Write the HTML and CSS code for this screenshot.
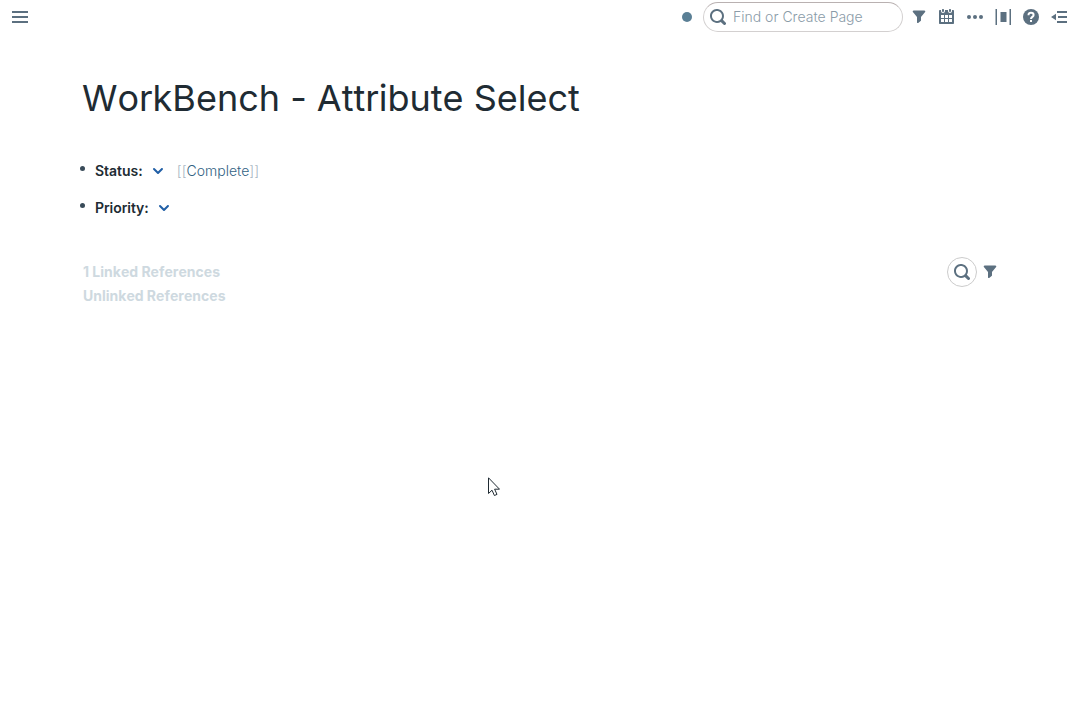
FILE: index.html
```html
<!DOCTYPE html>
<html lang="en">
<head>
<meta charset="utf-8">
<meta name="viewport" content="width=device-width, initial-scale=1">
<title>WorkBench - Attribute Select</title>
<link rel="stylesheet" href="styles.css">
</head>
<body>
<svg class="sprite" aria-hidden="true">
  <symbol id="search" viewBox="0 0 16 16"><path d="M15.55 13.43l-2.67-2.68a6.94 6.94 0 001.11-3.76c0-3.87-3.13-7-7-7s-7 3.13-7 7 3.13 7 7 7c1.39 0 2.68-.42 3.76-1.11l2.68 2.67a1.498 1.498 0 102.12-2.12zm-8.56-1.44c-2.76 0-5-2.24-5-5s2.24-5 5-5 5 2.24 5 5-2.24 5-5 5z"/></symbol>
  <symbol id="filter" viewBox="0 0 16 16"><path d="M13.300 1.500H2.700a1 1 0 00-.800 1.600L6 8v5.300a.75.75 0 001.200.600l2.400-1.900c.3-.2.400-.5.400-.8V8l4.100-4.900A1 1 0 0013.300 1.500z"/></symbol>
  <symbol id="chevron" viewBox="0 0 16 16"><path d="M12 5c-.28 0-.53.11-.71.29L8 8.590l-3.290-3.300a1.003 1.003 0 00-1.420 1.420l4 4c.18.18.43.29.71.29s.53-.11.71-.29l4-4A1.003 1.003 0 0012 5z"/></symbol>
</svg>
<header class="topbar">
  <button class="icon-button" aria-label="Menu"><svg class="icon" viewBox="0 0 16 16"><path d="M0 2h16v2H0zM0 7h16v2H0zM0 12h16v2H0z"/></svg></button>
  <div class="tools">
    <span class="sync-dot"></span>
    <label class="search-box">
      <svg class="icon"><use href="#search"/></svg>
      <input class="search-input" type="text" aria-label="Find or Create Page" placeholder="Find or Create Page">
    </label>
    <div class="actions">
      <button class="icon-button" aria-label="Filter"><svg class="icon"><use href="#filter"/></svg></button>
      <button class="icon-button" aria-label="Daily notes"><svg class="icon" viewBox="0 0 16 16"><path d="M11 3c.6 0 1-.5 1-1V1c0-.6-.4-1-1-1s-1 .4-1 1v1c0 .5.4 1 1 1zm3-2h-1v1c0 1.100-.9 2-2 2s-2-.9-2-2V1H6v1c0 1.100-.9 2-2 2s-2-.9-2-2V1H1c-.6 0-1 .5-1 1v12c0 .6.4 1 1 1h13c.6 0 1-.4 1-1V2c0-.6-.5-1-1-1zM5 13H2v-3h3v3zm0-4H2V6h3v3zm4 4H6v-3h3v3zm0-4H6V6h3v3zm4 4h-3v-3h3v3zm0-4h-3V6h3v3zM4 3c.6 0 1-.5 1-1V1c0-.6-.4-1-1-1S3 .4 3 1v1c0 .5.4 1 1 1z"/></svg></button>
      <button class="icon-button" aria-label="More"><svg class="icon" viewBox="0 0 16 16"><circle cx="2" cy="8" r="2"/><circle cx="8" cy="8" r="2"/><circle cx="14" cy="8" r="2"/></svg></button>
      <button class="icon-button" aria-label="Page width"><svg class="icon" viewBox="0 0 16 16"><path d="M.5 0H2v16H.5zM14.500 0H16v16h-1.500zM5.500 3h6v10h-6z"/></svg></button>
      <button class="icon-button" aria-label="Help"><svg class="icon" viewBox="0 0 16 16"><circle cx="8" cy="8" r="8"/><path class="question" d="M5.500 6.200C5.500 4.500 6.500 3.800 8 3.800s2.600.8 2.600 2.200c0 1.900-2.500 1.900-2.600 4M8 11v2"/></svg></button>
      <button class="icon-button" aria-label="Open sidebar"><svg class="icon" viewBox="0 0 16 16"><path d="M6 2h10v2H6zM7 7h9v2H7zM6 12h10v2H6zM5 4.800v6.400L0 8z"/></svg></button>
    </div>
  </div>
</header>
<main class="page">
  <h1 class="title">WorkBench - Attribute Select</h1>
  <ul class="blocks">
    <li class="block"><span class="bullet"></span><strong>Status:</strong><button class="chevron-button" aria-label="Choose status"><svg class="icon chevron"><use href="#chevron"/></svg></button><a class="page-link" href="#"><span class="bracket">[[</span>Complete<span class="bracket">]]</span></a></li>
    <li class="block"><span class="bullet"></span><strong>Priority:</strong><button class="chevron-button" aria-label="Choose priority"><svg class="icon chevron"><use href="#chevron"/></svg></button></li>
  </ul>
  <section class="references">
    <div class="reference-names"><div>1 Linked References</div><div>Unlinked References</div></div>
    <div class="reference-tools">
      <button class="round-button" aria-label="Search references"><svg class="icon"><use href="#search"/></svg></button>
      <button class="icon-button" aria-label="Filter references"><svg class="icon"><use href="#filter"/></svg></button>
    </div>
  </section>
</main>
<svg class="cursor" viewBox="0 0 12 20" aria-hidden="true"><path d="M.5.800V16.500L4 13.200l2.400 5.300 2.600-1.100-2.400-5.200h4.900z"/></svg>
</body>
</html>
```
FILE: styles.css
```css
* { box-sizing: border-box; }
body { margin: 0; background: #fff; color: #202b33; font: 14px/24px Inter, sans-serif; font-kerning: none; font-variant-ligatures: no-contextual; }
button { display: inline-flex; align-items: center; justify-content: center; padding: 0; border: 0; background: none; }
.sprite { display: none; }
.icon { display: block; width: 16px; height: 16px; flex: none; fill: #5c7080; }
.topbar { display: flex; align-items: center; justify-content: space-between; height: 34px; padding: 0 13px 0 12px; }
.tools { display: flex; align-items: center; }
.sync-dot { width: 10px; height: 10px; margin-right: 11px; border-radius: 50%; background: #5a7f95; }
.search-box { display: flex; align-items: center; gap: 7px; width: 200px; height: 30px; margin-right: 8px; padding: 0 6px; border: 1px solid #d3d0d0; border-top-color: #b9b1b1; border-radius: 15px; }
.search-input { flex: 1; min-width: 0; padding: 0; border: 0; outline: 0; background: none; color: #202b33; font: 300 14px/20px Inter, sans-serif; font-kerning: none; }
.search-input::placeholder { color: #8a9ba8; opacity: 1; }
.actions { display: flex; gap: 12px; }
.question { fill: none; stroke: #fff; stroke-width: 2; }
.page { padding: 40px 82px 0 80px; }
.title { margin: 0; padding-left: 2px; font-size: 36px; line-height: 48px; font-weight: 400; }
.blocks { margin: 37px 0 0; padding: 0; list-style: none; }
.block { display: flex; align-items: center; height: 24px; margin-bottom: 13px; }
.block strong { font-weight: 600; }
.bullet { width: 5px; height: 5px; margin: 0 10px 5px 0; border-radius: 50%; background: #394b59; }
.chevron-button { margin: 0 11px 0 7px; }
.chevron { fill: #215fa6; }
.page-link { color: #326384; font-weight: 300; text-decoration: none; }
.bracket { color: #a7b6c2; }
.references { display: flex; align-items: flex-start; justify-content: space-between; margin-top: 40px; padding-left: 3px; color: #ced9e0; font-weight: 700; }
.reference-tools { display: flex; align-items: center; gap: 5px; margin-top: -3px; }
.round-button { width: 30px; height: 30px; border: 1px solid #ccc; border-radius: 50%; }
.cursor { position: absolute; left: 488px; top: 477px; width: 12px; height: 20px; fill: #fff; stroke: #202b33; }
```
